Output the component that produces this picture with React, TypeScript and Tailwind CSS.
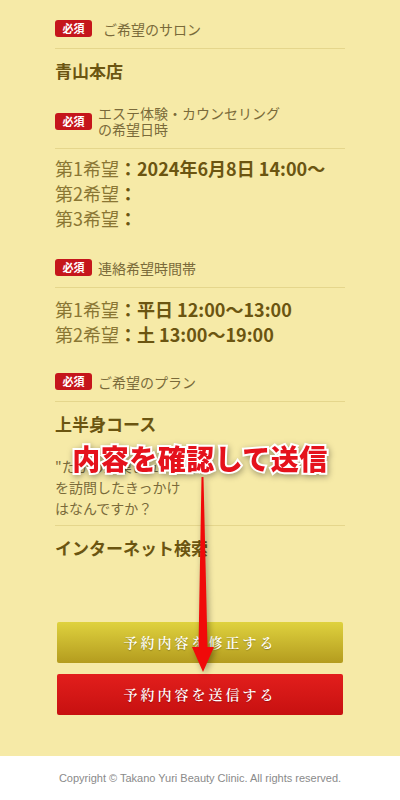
import React from 'react';

const sans = '[font-family:"Noto_Sans_CJK_JP","Noto_Sans",sans-serif]';

function Required() {
  return (
    <span className="flex h-[17px] w-[37px] shrink-0 items-center justify-center rounded-[3px] bg-[#c5161b] text-[11px] font-bold leading-none text-white">
      必須
    </span>
  );
}

type HeaderProps = { label: string[]; className?: string; labelClass?: string };

function SectionHeader({ label, className = '', labelClass = '' }: HeaderProps) {
  return (
    <div className={`flex items-center gap-[6px] border-b border-[#e5d68c] pb-[11px] ${className}`}>
      <Required />
      <div className={`text-[14px] leading-[16px] text-[#7a6a3a] ${labelClass}`}>
        {label.map((l) => (
          <span key={l} className="block h-[16px]">
            {l}
          </span>
        ))}
      </div>
    </div>
  );
}

function Choice({ n, value }: { n: number; value?: string }) {
  return (
    <div className="flex items-baseline text-[18px] leading-[25px]">
      <span className="text-[#8a7633]">第{n}希望</span>
      <span className="font-bold text-[#6b5511]">：{value}</span>
    </div>
  );
}

export default function App() {
  return (
    <div className={`flex min-h-screen w-[400px] flex-col ${sans}`}>
      <main className="relative bg-[#f6eaa7] px-[55px] pt-[20px] pb-[41px]">
        {/* salon */}
        <SectionHeader label={['ご希望のサロン']} labelClass="pl-[5px]" />
        <p className="mt-[10px] text-[17px] font-bold leading-[24px] text-[#6b5511]">青山本店</p>

        {/* date */}
        <SectionHeader className="mt-[22px]" label={['エステ体験・カウンセリング', 'の希望日時']} />
        <div className="mt-[7px]">
          <Choice n={1} value="2024年6月8日 14:00〜" />
          <Choice n={2} />
          <Choice n={3} />
        </div>

        {/* contact time */}
        <SectionHeader className="mt-[28px]" label={['連絡希望時間帯']} />
        <div className="mt-[9px]">
          <Choice n={1} value="平日 12:00〜13:00" />
          <Choice n={2} value="土 13:00〜19:00" />
        </div>

        {/* plan */}
        <SectionHeader className="mt-[26px]" label={['ご希望のプラン']} />
        <p className="mt-[10px] text-[17px] font-bold leading-[24px] text-[#6b5511]">上半身コース</p>

        {/* question */}
        <div className="mt-[20px] border-b border-[#e5d68c] pb-[6px]">
          <p className="w-[160px] text-[14px] leading-[21px] text-[#7a6a3a]">
            "たかの友梨ビューティ"
            <br />
            を訪問したきっかけ
            <br />
            はなんですか？
          </p>
        </div>
        <p className="mt-[10px] text-[17px] font-bold leading-[24px] text-[#6b5511]">インターネット検索</p>

        {/* buttons */}
        <div className="mx-[2px] mt-[62px] flex flex-col gap-[11px] [font-family:'Noto_Serif_CJK_JP','Liberation_Serif','Noto_Sans_CJK_JP',serif]">
          <button className="h-[41px] w-full rounded-[2px] bg-gradient-to-b from-[#dfd23e] to-[#b49c1e] text-[14px] font-semibold tracking-[3px] text-white [text-shadow:0_1px_1px_rgba(0,0,0,0.25)]">
            予約内容を修正する
          </button>
          <button className="h-[41px] w-full rounded-[2px] bg-gradient-to-b from-[#e21e1c] to-[#c71010] text-[14px] font-semibold tracking-[3px] text-white [text-shadow:0_1px_1px_rgba(0,0,0,0.25)]">
            予約内容を送信する
          </button>
        </div>

        {/* annotation overlay */}
        <div className="pointer-events-none absolute left-0 top-[440px] w-full text-center">
          <span className="text-[28px] font-black leading-[36px] tracking-[0.5px] text-[#e5121c] [-webkit-text-stroke:4px_#fff] [paint-order:stroke_fill] [filter:drop-shadow(1px_2px_3px_rgba(0,0,0,0.35))]">
            内容を確認して送信
          </span>
        </div>
        <svg
          className="pointer-events-none absolute left-[180px] top-[470px] [filter:drop-shadow(2px_2px_3px_rgba(0,0,0,0.35))]"
          width="46"
          height="210"
          viewBox="0 0 46 210"
        >
          <polygon points="21.5,7 23.5,7 27.5,177 34,177 23,202 12,177 18.5,177" fill="#f00a0a" />
        </svg>
      </main>
      <footer className="flex h-[45px] items-center justify-center bg-white">
        <p className="text-[11px] text-[#8a8a8a] [font-family:'Liberation_Sans',sans-serif]">
          Copyright © Takano Yuri Beauty Clinic. All rights reserved.
        </p>
      </footer>
    </div>
  );
}
